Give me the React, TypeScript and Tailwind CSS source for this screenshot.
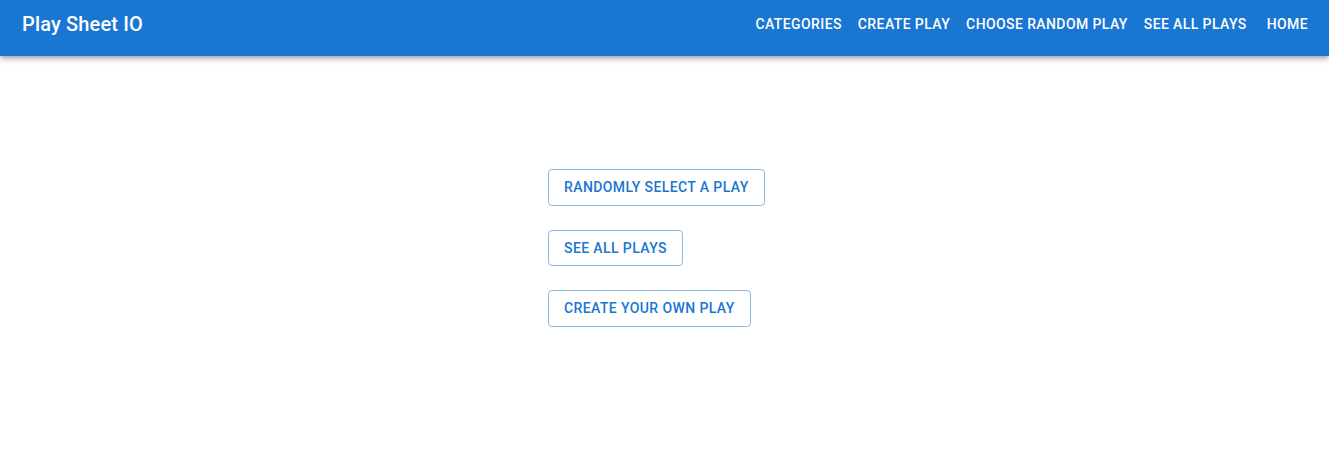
const NAV = ['Categories', 'Create Play', 'Choose Random Play', 'See All Plays'];
const ACTIONS = ['Randomly Select a Play', 'See All Plays', 'Create Your Own Play'];

export default function App() {
  return (
    <div className="min-h-[462px] bg-white font-['Roboto',sans-serif]">
      <header className="flex h-14 items-center bg-[#1976d2] pb-2 pl-[22px] pr-[13px] text-white shadow-[0_2px_4px_-1px_rgba(0,0,0,0.2),0_4px_5px_0_rgba(0,0,0,0.14),0_1px_10px_0_rgba(0,0,0,0.12)]">
        <h1 className="flex-1 text-xl font-medium leading-[1.6] tracking-[0.0075em]">Play Sheet IO</h1>
        <nav className="flex items-center">
          {NAV.map((item) => (
            <button
              key={item}
              className="rounded px-2 py-1.5 text-sm font-medium uppercase leading-[1.75] tracking-[0.02857em]"
            >
              {item}
            </button>
          ))}
          <button className="ml-1 rounded px-2 py-1.5 text-sm font-medium uppercase leading-[1.75] tracking-[0.02857em]">
            Home
          </button>
        </nav>
      </header>

      <main className="flex flex-col items-start gap-6 pl-[548px] pt-[113px]">
        {ACTIONS.map((label) => (
          <button
            key={label}
            className="rounded border border-[#1976d2]/50 px-[15px] py-[5px] text-sm font-medium uppercase leading-[1.75] tracking-[0.02857em] text-[#1976d2]"
          >
            {label}
          </button>
        ))}
      </main>
    </div>
  );
}
